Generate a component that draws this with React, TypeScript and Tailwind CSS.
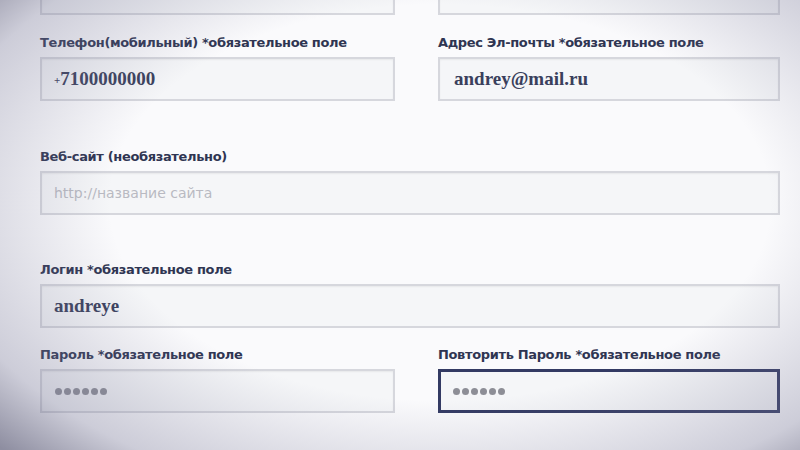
import React from 'react';

const labelCls =
  "block h-[18px] leading-[18px] text-[13px] font-bold text-[#2f3552] whitespace-nowrap [font-family:'DejaVu_Sans',Verdana,sans-serif] tracking-[-0.35px]";
const boxCls =
  'h-[44px] border-2 border-[#d6d7dd] bg-[#f5f6f8] shadow-[inset_0_1px_2px_rgba(0,0,0,0.06)] flex items-center px-[12px]';
const valueCls =
  "text-[19px] font-bold text-[#3a3f5c] [font-family:'Liberation_Serif',serif]";

const Dots = () => (
  <div className="flex gap-[2px] pl-[1px]">
    {[0, 1, 2, 3, 4, 5].map((i) => (
      <span key={i} className="block w-[7px] h-[7px] rounded-full bg-[#8d8e96]" />
    ))}
  </div>
);

interface FieldProps {
  label?: string;
  children?: React.ReactNode;
  focused?: boolean;
}

const Field: React.FC<FieldProps> = ({ label, children, focused }) => (
  <div>
    {label && <label className={labelCls}>{label}</label>}
    <div
      className={
        focused
          ? 'mt-[5px] h-[44px] border-[3px] border-[#333a63] bg-[#f5f6f8] flex items-center px-[11px]'
          : `${label ? 'mt-[5px] ' : ''}${boxCls}`
      }
    >
      {children}
    </div>
  </div>
);

export default function App() {
  return (
    <div className="relative w-[800px] h-[450px] overflow-hidden bg-[#fafafc]">
      <div className="pl-[40px] pr-[20px] -mt-[29px]">
        {/* Имя / Фамилия (cut off at the top) */}
        <div className="grid grid-cols-[355px_342px] gap-x-[43px]">
          <Field>
            <span className={`${valueCls} -mt-[22px]`}>Андрей</span>
          </Field>
          <Field>
            <span className={`${valueCls} -mt-[22px]`}>Шамилов</span>
          </Field>
        </div>

        <div className="grid grid-cols-[355px_342px] gap-x-[43px] mt-[19px]">
          <Field label="Телефон(мобильный) *обязательное поле">
            <span className={valueCls}>
              <span className="text-[11px] align-middle">+</span>7100000000
            </span>
          </Field>
          <Field label="Адрес Эл-почты *обязательное поле">
            <span className={`${valueCls} pl-[2px]`}>andrey@mail.ru</span>
          </Field>
        </div>

        <div className="mt-[47px]">
          <Field label="Веб-сайт (необязательно)">
            <span className="text-[14px] text-[#b9bac2] [font-family:'DejaVu_Sans',sans-serif]">
              http://название сайта
            </span>
          </Field>
        </div>

        <div className="mt-[46px]">
          <Field label="Логин *обязательное поле">
            <span className={valueCls}>andreye</span>
          </Field>
        </div>

        <div className="grid grid-cols-[355px_342px] gap-x-[43px] mt-[18px]">
          <Field label="Пароль *обязательное поле">
            <Dots />
          </Field>
          <Field label="Повторить Пароль *обязательное поле" focused>
            <Dots />
          </Field>
        </div>
      </div>

      {/* vignette */}
      <div className="pointer-events-none absolute inset-0 bg-[radial-gradient(ellipse_75%_80%_at_55%_45%,rgba(255,255,255,0)_55%,rgba(120,120,150,0.35)_85%,rgba(70,70,100,0.6)_100%)]" />
    </div>
  );
}
